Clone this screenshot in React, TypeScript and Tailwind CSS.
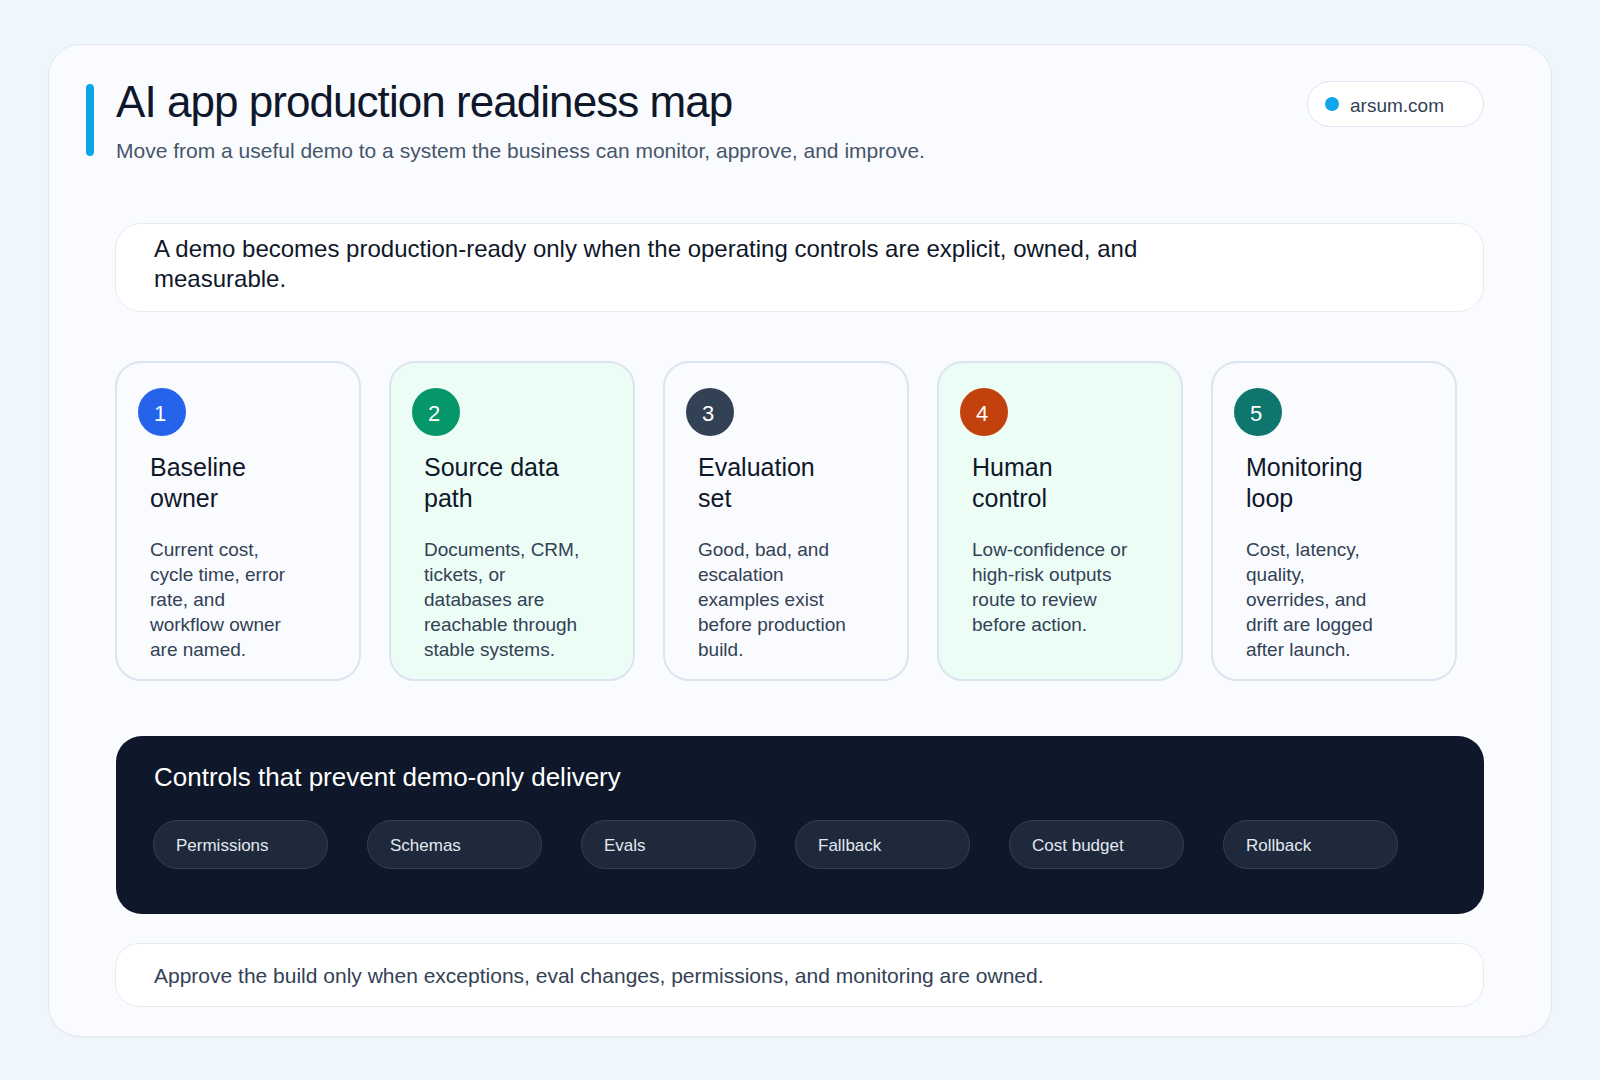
import React from "react";

const steps = [
  { n: "1", color: "bg-[#2563eb]", green: false, title: ["Baseline", "owner"], body: "Current cost,\ncycle time, error\nrate, and\nworkflow owner\nare named." },
  { n: "2", color: "bg-[#059669]", green: true, title: ["Source data", "path"], body: "Documents, CRM,\ntickets, or\ndatabases are\nreachable through\nstable systems." },
  { n: "3", color: "bg-[#334155]", green: false, title: ["Evaluation", "set"], body: "Good, bad, and\nescalation\nexamples exist\nbefore production\nbuild." },
  { n: "4", color: "bg-[#c2410c]", green: true, title: ["Human", "control"], body: "Low-confidence or\nhigh-risk outputs\nroute to review\nbefore action." },
  { n: "5", color: "bg-[#0f766e]", green: false, title: ["Monitoring", "loop"], body: "Cost, latency,\nquality,\noverrides, and\ndrift are logged\nafter launch." },
];

const controls = ["Permissions", "Schemas", "Evals", "Fallback", "Cost budget", "Rollback"];

export default function App() {
  return (
    <div className="h-[1080px] w-[1600px] overflow-hidden bg-[#eff6fc] pl-[48px] pt-[44px] font-['Liberation_Sans',Arial,sans-serif]">
      <div className="h-[993px] w-[1504px] rounded-[32px] border border-[#e2e8f0] bg-[#f9fbfe] pl-[37px] pr-[67px] pt-[39px] shadow-[0_1px_2px_rgba(15,23,42,0.03)]">
        <header className="flex items-start">
          <div className="h-[72px] w-[8px] rounded-full bg-[#0ea5e9]" />
          <div className="ml-[22px] flex-1">
            <h1 className="text-[44px] leading-[35px] font-normal tracking-[-0.95px] text-[#0f172a]">AI app production readiness map</h1>
            <p className="mt-[18px] text-[21px] leading-[28px] text-[#475569]">Move from a useful demo to a system the business can monitor, approve, and improve.</p>
          </div>
          <div className="flex h-[46px] w-[177px] -translate-y-[3px] items-center rounded-full border-[1.5px] border-[#dfe5ee] bg-white pl-[17px]">
            <span className="h-[14px] w-[14px] rounded-full bg-[#0ea5e9]" />
            <span className="ml-[11px] mt-[4px] text-[19px] text-[#334155]">arsum.com</span>
          </div>
        </header>

        <div className="ml-[30px] mt-[58px]">
          <div className="-ml-[1px] h-[89px] rounded-[26px] border-[1.5px] border-[#e6ebf3] bg-white pl-[38px] pr-[320px] pt-[9.5px] text-[24px] leading-[30px] text-[#0f172a]">
            A demo becomes production-ready only when the operating controls are explicit, owned, and measurable.
          </div>

          <div className="-ml-[1px] mt-[49px] flex gap-[28px]">
            {steps.map((s) => (
              <div
                key={s.n}
                className={
                  "h-[320px] w-[246px] rounded-[26px] border-2 border-[#dbe5f0] pl-[21px] pt-[25px] " +
                  (s.green ? "bg-[#ecfdf5]" : "bg-[#f9fbfe]")
                }
              >
                <div className={"flex h-[48px] w-[48px] items-center justify-center rounded-full pr-[4px] pt-[2px] text-[22px] font-medium text-white " + s.color}>{s.n}</div>
                <div className="pl-[12px]">
                  <h3 className="mt-[16px] text-[25px] leading-[31px] font-normal text-[#0f172a]">
                    {s.title[0]}
                    <br />
                    {s.title[1]}
                  </h3>
                  <p className="mt-[23px] whitespace-pre-line text-[19px] leading-[25px] text-[#334155]">{s.body}</p>
                </div>
              </div>
            ))}
          </div>

          <div className="mt-[55px] h-[178px] rounded-[26px] bg-[#0f172a] pl-[37px] pt-[23px]">
            <h2 className="pl-[1px] text-[26px] leading-[36px] font-normal text-white">Controls that prevent demo-only delivery</h2>
            <div className="mt-[25px] flex gap-[39px]">
              {controls.map((c) => (
                <div key={c} className="flex h-[49px] w-[175px] items-center rounded-full border border-[#334155] bg-[#1e293b] pl-[22px] pt-[2px] text-[17px] text-[#e2e8f0]">
                  {c}
                </div>
              ))}
            </div>
          </div>

          <div className="-ml-[1px] mt-[29px] flex h-[64px] items-center rounded-[24px] border-[1.5px] border-[#e6ebf3] bg-white pl-[38px] pt-[2px] text-[21px] text-[#334155]">
            Approve the build only when exceptions, eval changes, permissions, and monitoring are owned.
          </div>
        </div>
      </div>
    </div>
  );
}
